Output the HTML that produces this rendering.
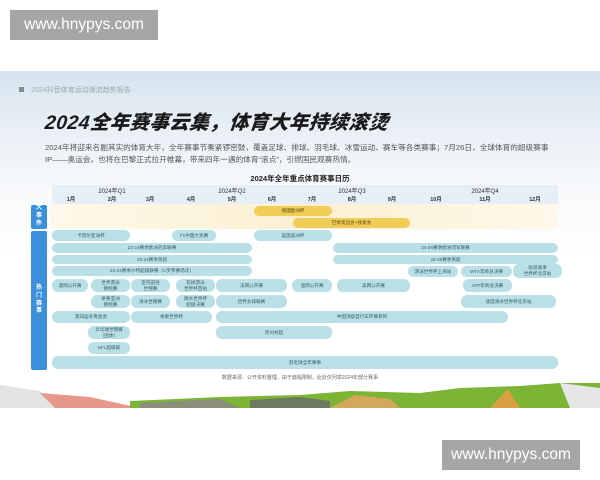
<!DOCTYPE html>
<html><head><meta charset="utf-8"><style>
*{margin:0;padding:0;box-sizing:border-box}
body{width:600px;height:480px;background:#fff;position:relative;overflow:hidden;font-family:"Liberation Sans","Noto Sans CJK SC",sans-serif}
.img{position:absolute;left:0;top:71px;width:600px;height:337px;background:linear-gradient(#d6e4ef 0%,#e9f0f6 18%,#f7f9fb 35%,#fff 55%);overflow:hidden}
.a{position:absolute}
.wm{position:absolute;background:#a6a6a6;color:#fff;font-size:15.5px;display:flex;align-items:center;justify-content:center}
.bar{position:absolute;background:#b9e0e7;border-radius:6px;color:#3d5a63;font-size:4.6px;display:flex;align-items:center;justify-content:center;text-align:center;line-height:1.25}
.y{background:#f2cd55;color:#5a4a10}
.lab{position:absolute;background:#3b8fdb;border-radius:2px;color:#fff;font-size:6px;font-weight:bold;display:flex;align-items:center;justify-content:center;text-align:center;line-height:1.3}
.m{position:absolute;top:124px;font-size:5.5px;color:#333;font-weight:bold;transform:translateX(-50%)}
.q{position:absolute;top:115px;font-size:6px;color:#333;transform:translateX(-50%)}
</style></head><body>
<div class="wm" style="left:10px;top:10px;width:148px;height:30px">www.hnypys.com</div>
<div class="img">
 <div class="a" style="left:19px;top:16px;width:5px;height:5px;background:#888"></div>
 <div class="a" style="left:31px;top:14px;font-size:7px;color:#9aa">2024抖音体育运动潮流趋势报告</div>
 <div class="a" style="left:45px;top:41px;font-size:19.5px;line-height:22px;font-weight:900;color:#1a1a1a;font-style:italic;letter-spacing:0.4px;transform:skewX(-6deg)">2024全年赛事云集，体育大年持续滚烫</div>
 <div class="a" style="left:45px;top:71px;width:540px;font-size:7.65px;color:#555;line-height:12px;white-space:nowrap">2024年将迎来名副其实的体育大年，全年赛事节奏紧锣密鼓，覆盖足球、排球、羽毛球、冰雪运动、赛车等各类赛事；7月26日，全球体育的超级赛事<br>IP——奥运会，也将在巴黎正式拉开帷幕，带来四年一遇的体育“滚点”，引燃国民观赛热情。</div>
 <div class="a" style="left:0;width:600px;top:102px;text-align:center;font-size:7.5px;font-weight:bold;color:#222">2024年全年重点体育赛事日历</div>
 <div class="a" style="left:52px;top:114px;width:506px;height:19px;background:#e6eef7"></div>
 <div class="q" style="left:112px">2024年Q1</div><div class="q" style="left:232px">2024年Q2</div><div class="q" style="left:352px">2024年Q3</div><div class="q" style="left:485px">2024年Q4</div>
 <div class="m" style="left:71px">1月</div><div class="m" style="left:112px">2月</div><div class="m" style="left:150px">3月</div><div class="m" style="left:191px">4月</div><div class="m" style="left:232px">5月</div><div class="m" style="left:272px">6月</div><div class="m" style="left:312px">7月</div><div class="m" style="left:352px">8月</div><div class="m" style="left:392px">9月</div><div class="m" style="left:436px">10月</div><div class="m" style="left:485px">11月</div><div class="m" style="left:535px">12月</div>
 <div class="a" style="left:50px;top:133px;width:508px;height:25px;background:linear-gradient(90deg,#fdf8ea,#fcf0d2 50%,#fdf8ea)"></div>
 <div class="lab" style="left:31px;top:134px;width:16px;height:24px">大<br>事<br>件</div>
 <div class="lab" style="left:31px;top:160px;width:16px;height:139px">热<br>门<br>赛<br>事</div>
</div>
<div class="bar y" style="left:254px;top:206px;width:78px;height:10px">德国欧洲杯</div>
<div class="bar y" style="left:293px;top:218px;width:117px;height:10px">巴黎奥运会+残奥会</div>
<div class="bar" style="left:52px;top:230px;width:78px;height:11px">卡塔尔亚洲杯</div>
<div class="bar" style="left:172px;top:230px;width:44px;height:11px">F1中国大奖赛</div>
<div class="bar" style="left:254px;top:230px;width:78px;height:11px">美国美洲杯</div>
<div class="bar" style="left:52px;top:243px;width:200px;height:10px">23-24赛季欧洲冠军联赛</div>
<div class="bar" style="left:333px;top:243px;width:225px;height:10px">24-25赛季欧洲冠军联赛</div>
<div class="bar" style="left:52px;top:255px;width:200px;height:9px">23-24赛季英超</div>
<div class="bar" style="left:333px;top:255px;width:225px;height:9px">24-25赛季英超</div>
<div class="bar" style="left:52px;top:266px;width:200px;height:10px">23-24赛季沙特超级联赛（C罗参赛场次）</div>
<div class="bar" style="left:408px;top:266px;width:50px;height:11px">游泳世界杯上海站</div>
<div class="bar" style="left:461px;top:266px;width:51px;height:11px">WTA年终总决赛</div>
<div class="bar" style="left:513px;top:264px;width:49px;height:14px">短道速滑<br>世界杯北京站</div>
<div class="bar" style="left:52px;top:279px;width:36px;height:13px">澳网公开赛</div>
<div class="bar" style="left:91px;top:279px;width:39px;height:13px">世界游泳<br>锦标赛</div>
<div class="bar" style="left:131px;top:279px;width:39px;height:13px">室内田径<br>世锦赛</div>
<div class="bar" style="left:176px;top:279px;width:39px;height:13px">花样游泳<br>世界杯首站</div>
<div class="bar" style="left:216px;top:279px;width:71px;height:13px">法网公开赛</div>
<div class="bar" style="left:292px;top:279px;width:40px;height:13px">温网公开赛</div>
<div class="bar" style="left:337px;top:279px;width:73px;height:13px">美网公开赛</div>
<div class="bar" style="left:463px;top:279px;width:49px;height:13px">ATP年终总决赛</div>
<div class="bar" style="left:91px;top:295px;width:39px;height:13px">举重亚洲<br>锦标赛</div>
<div class="bar" style="left:131px;top:295px;width:39px;height:13px">滑冰世锦赛</div>
<div class="bar" style="left:176px;top:295px;width:39px;height:13px">跳水世界杯<br>超级决赛</div>
<div class="bar" style="left:216px;top:295px;width:71px;height:13px">世界女排联赛</div>
<div class="bar" style="left:461px;top:295px;width:95px;height:13px">速度滑冰世界杯北京站</div>
<div class="bar" style="left:52px;top:311px;width:78px;height:12px">第四届冬青奥会</div>
<div class="bar" style="left:131px;top:311px;width:81px;height:12px">举重世界杯</div>
<div class="bar" style="left:216px;top:311px;width:292px;height:12px">中国顶级自行车环赛系列</div>
<div class="bar" style="left:88px;top:326px;width:42px;height:13px">乒乓球世锦赛<br>（团体）</div>
<div class="bar" style="left:216px;top:326px;width:116px;height:13px">贵州村超</div>
<div class="bar" style="left:88px;top:342px;width:42px;height:12px">NFL超级碗</div>
<div class="bar" style="left:52px;top:356px;width:506px;height:13px">羽毛球全年赛事</div>
<div class="a" style="left:0;width:600px;top:374px;text-align:center;font-size:5px;color:#666">数据来源：公开资料整理，由于篇幅限制，此处仅列举2024年部分赛事</div>
<svg class="a" style="left:0;top:383px" width="600" height="25">
 <path d="M0 2 L40 8 L60 25 L0 25Z" fill="#e4e4e4"/>
 <path d="M40 10 L90 14 L140 25 L55 25Z" fill="#e7988a"/>
 <path d="M130 18 L220 14 L300 12 L350 8 L420 10 L460 5 L520 3 L560 0 L600 -2 L600 25 L130 25Z" fill="#7cb536"/>
 <path d="M140 20 L220 16 L240 25 L140 25Z" fill="#8a8f7a"/>
 <path d="M250 17 L300 14 L330 18 L330 25 L250 25Z" fill="#6d7a5f"/>
 <path d="M330 25 L355 12 L390 16 L400 25Z" fill="#d4a85a"/>
 <path d="M490 25 L508 6 L520 25Z" fill="#d9a040"/>
 <path d="M560 0 L600 5 L600 25 L570 25Z" fill="#e6e6e6"/>
</svg>
<div class="wm" style="left:442px;top:440px;width:138px;height:30px">www.hnypys.com</div>
</body></html>
